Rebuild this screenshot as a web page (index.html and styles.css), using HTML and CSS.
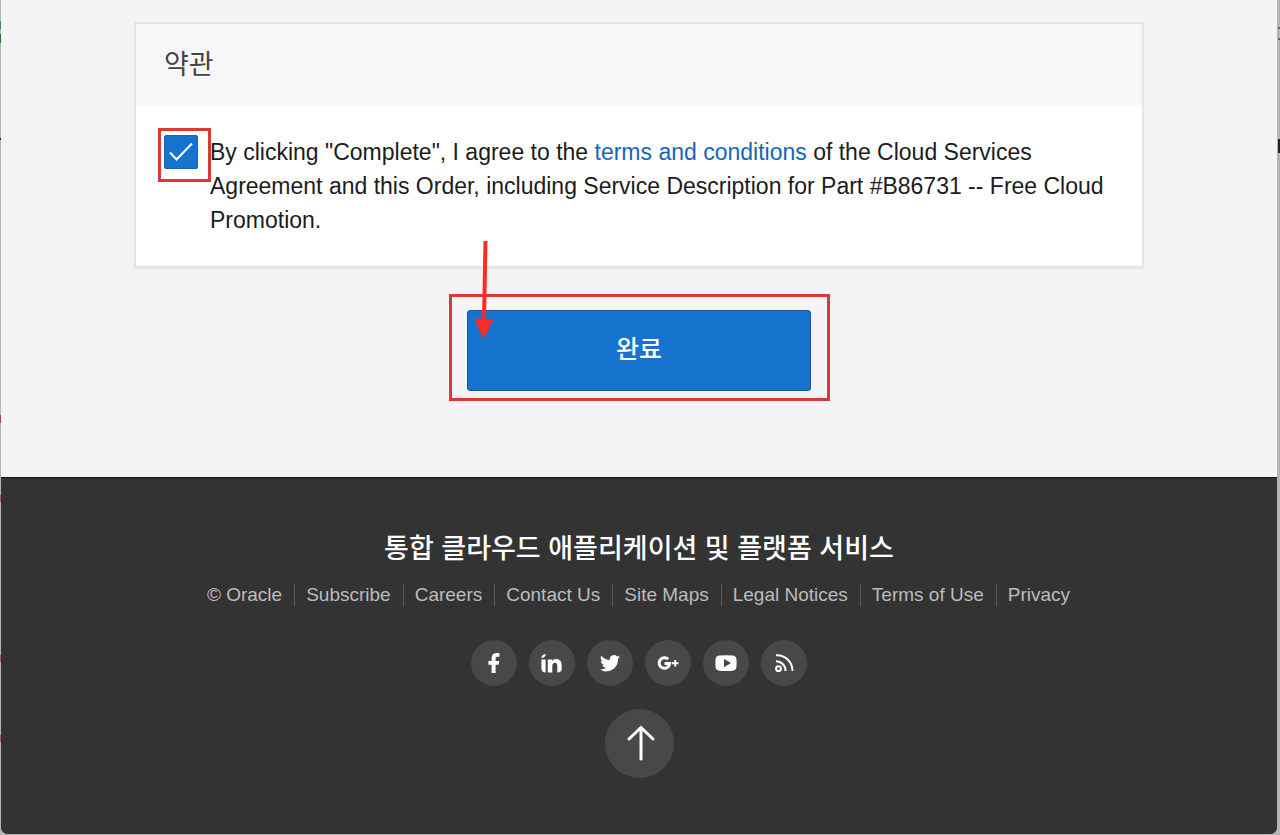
FILE: index.html
```html
<!DOCTYPE html>
<html lang="ko">
<head>
<meta charset="utf-8">
<meta name="viewport" content="width=device-width, initial-scale=1">
<title>약관</title>
<link rel="stylesheet" href="styles.css">
</head>
<body>
<div class="window">
  <main class="content">
    <section class="card">
      <h2 class="card-title">약관</h2>
      <div class="card-body">
        <span class="check">
          <input class="check-input" type="checkbox" id="agree" checked>
          <svg class="check-mark" viewBox="0 0 34 34" aria-hidden="true"><path d="M6 17.500 12.500 24.500 28 8.500"/></svg>
          <span class="highlight highlight-check"></span>
        </span>
        <label class="agree-text" for="agree">By clicking "Complete", I agree to the <a href="#terms">terms and conditions</a> of the Cloud Services Agreement and this Order, including Service Description for Part #B86731 -- Free Cloud Promotion.</label>
      </div>
    </section>
    <div class="action">
      <button class="complete" type="button">완료</button>
      <span class="highlight highlight-action"></span>
      <svg class="pointer" viewBox="0 0 20 100" aria-hidden="true"><path d="M9.500 1h4L12 80H8z"/><path d="M0 78.500 19.500 79.500 9.500 99z"/></svg>
    </div>
  </main>
  <footer class="footer">
    <h3 class="footer-title">통합 클라우드 애플리케이션 및 플랫폼 서비스</h3>
    <nav class="links">
      <a href="#oracle">© Oracle</a>
      <a href="#subscribe">Subscribe</a>
      <a href="#careers">Careers</a>
      <a href="#contact">Contact Us</a>
      <a href="#maps">Site Maps</a>
      <a href="#legal">Legal Notices</a>
      <a href="#use">Terms of Use</a>
      <a href="#privacy">Privacy</a>
    </nav>
    <div class="social">
      <a href="#facebook" aria-label="Facebook"><svg viewBox="0 0 46 46"><path d="M20.600 33V24.800H17.400V21h3.200v-2.700c0-3.500 2-5.300 5.200-5.300 1 0 1.900.1 2.600.2v3.500h-1.900c-1.500 0-1.900.8-1.900 1.900V21h3.600l-.5 3.800h-3.100V33z"/></svg></a>
      <a href="#linkedin" aria-label="LinkedIn"><svg viewBox="0 0 46 46"><path d="M12.400 19.400h4.200v13.200c-2.300-.2-4.200-1.500-4.200-3.800zM12.400 18c0-2.300 1.500-3.800 4.400-4 0 2.300-1.500 3.900-4.400 4zM18.800 19.400h4.300v1.700c.9-1.300 2.200-2 4-2 3.600 0 5.600 2.400 5.600 6.400v3.600c0 2.100-1.500 3.500-4.400 3.500v-7c0-1.900-.8-2.800-2.300-2.800s-2.700 1-2.700 2.900v6.900h-4.500z"/></svg></a>
      <a href="#twitter" aria-label="Twitter"><svg viewBox="0 0 46 46"><path d="M33 17c-.7.300-1.500.5-2.300.6.800-.5 1.500-1.300 1.800-2.200-.8.500-1.700.8-2.600 1a4.100 4.100 0 0 0-7 3.700c-3.400-.2-6.400-1.800-8.500-4.300a4.100 4.100 0 0 0 1.300 5.500c-.7 0-1.300-.2-1.900-.5 0 2 1.400 3.700 3.300 4.100-.6.200-1.200.2-1.800.1.500 1.600 2 2.800 3.800 2.800a8.300 8.300 0 0 1-6.100 1.700 11.700 11.700 0 0 0 18-10.400c.8-.6 1.500-1.300 2-2.100z"/></svg></a>
      <a href="#google" aria-label="Google Plus"><svg viewBox="0 0 46 46"><path class="stroke-bold" d="M23.200 19.200a5.300 5.300 0 1 0 1.500 4.400h-5.200"/><path class="stroke-plus" d="M27 23.200h6.500M30.200 20v6.500"/></svg></a>
      <a href="#youtube" aria-label="YouTube"><svg viewBox="0 0 46 46"><path fill-rule="evenodd" d="M16.500 15.600q6.500-.6 13 0 3.500.2 3.900 3.400.5 4.200 0 8.300-.4 3.100-3.900 3.400-6.500.6-13 0-3.500-.3-3.900-3.400-.5-4.100 0-8.300.4-3.200 3.900-3.400zM21 19v8.200l7-4.100z"/></svg></a>
      <a href="#rss" aria-label="RSS"><svg viewBox="0 0 46 46"><g class="stroke-fine"><circle cx="17.500" cy="28.700" r="2.400"/><path d="M15 21.200a9.500 9.500 0 0 1 9.500 9.700M15 15.200a15.500 15.500 0 0 1 16.500 15.700"/></g></svg></a>
    </div>
    <a class="to-top" href="#top" aria-label="Top"><svg viewBox="0 0 69 69"><path d="M36 50V19M24 30 36 18.500 48 30"/></svg></a>
  </footer>
</div>
</body>
</html>
```
FILE: styles.css
```css
* {
  box-sizing: border-box;
}

body {
  margin: 0;
  padding: 0 3px 1px 1px;
  background-color: #b5b5b5;
  background-image:
    linear-gradient(#3c8a43, #3c8a43),
    linear-gradient(#276f2d, #276f2d),
    linear-gradient(#222, #222),
    linear-gradient(#a04048, #a04048),
    linear-gradient(#a0605c, #a0605c),
    linear-gradient(#a0605c, #a0605c),
    linear-gradient(#a0605c, #a0605c),
    linear-gradient(#666, #666),
    linear-gradient(#666, #666),
    linear-gradient(#222, #222);
  background-position: 0 21px, 0 34px, 0 138px, 0 415px, 0 495px, 0 655px, 0 735px, 100% 27px, 100% 38px, 100% 139px;
  background-repeat: no-repeat;
  background-size: 1px 8px, 1px 9px, 1px 2px, 1px 8px, 1px 7px, 1px 7px, 1px 7px, 2px 2px, 2px 2px, 2px 14px;
  font-family: "Liberation Sans", "Noto Sans CJK KR", sans-serif;
}

.window {
  display: flex;
  flex-direction: column;
  min-height: calc(100vh - 1px);
  overflow: hidden;
  border-radius: 0 0 7px 7px;
  background: #333;
}

.content {
  padding: 22px 133px 86px;
  background: #f4f4f4;
}

.card {
  border: 2px solid #e5e5e5;
  background: #fff;
  box-shadow: 0 1px 1px #e8e8e8;
}

.card-title {
  margin: 0;
  padding: 21px 28px;
  background: #f7f7f7;
  color: #444;
  font-size: 27px;
  font-weight: 400;
  line-height: 40px;
}

.card-body {
  display: flex;
  gap: 12px;
  padding: 29px 28px;
}

.check {
  position: relative;
  flex: none;
  width: 34px;
  height: 34px;
}

.check-input {
  appearance: none;
  display: block;
  width: 34px;
  height: 34px;
  margin: 0;
  border: 1px solid #1c63b0;
  border-radius: 2px;
  background: #1674cf;
}

.check-mark {
  position: absolute;
  inset: 0;
  fill: none;
  stroke: #fff;
  stroke-width: 2;
  pointer-events: none;
}

.agree-text {
  color: #1c1c1c;
  font-size: 23px;
  line-height: 34px;
}

.agree-text a {
  color: #1465bd;
  text-decoration: none;
}

.highlight {
  position: absolute;
  border: 3px solid #d83a34;
  pointer-events: none;
}

.highlight-check {
  inset: -7px -13px -13px -6px;
}

.action {
  position: relative;
  width: 344px;
  margin: 42px auto 0;
}

.complete {
  display: block;
  width: 100%;
  height: 81px;
  padding: 0 0 8px;
  border: 1px solid #1d559c;
  border-radius: 3px;
  background: #1674cf;
  color: #fff;
  font: 500 25px "Noto Sans CJK KR", sans-serif;
}

.highlight-action {
  inset: -16px -19px -10px -18px;
}

.pointer {
  position: absolute;
  top: -70px;
  left: 7px;
  width: 20px;
  height: 100px;
  fill: #fa2d23;
  pointer-events: none;
}

.footer {
  display: flex;
  flex: 1;
  flex-direction: column;
  align-items: center;
  padding: 49px 24px 56px;
  border-top: 1px solid #151515;
  background: #333;
}

.footer-title {
  margin: 0;
  color: #fff;
  font-family: "Noto Sans CJK KR", sans-serif;
  font-size: 27px;
  font-weight: 500;
  line-height: 40px;
}

.links {
  display: flex;
  flex-wrap: wrap;
  justify-content: center;
  margin-top: 17px;
}

.links a {
  padding: 0 12px 0 11px;
  color: #bcbcbc;
  font-size: 19px;
  line-height: 22px;
  text-decoration: none;
}

.links a + a {
  border-left: 1px solid #5c5c5c;
}

.social {
  display: flex;
  gap: 12px;
  margin-top: 34px;
}

.social a {
  width: 46px;
  height: 46px;
  border-radius: 50%;
  background: #484848;
}

.social svg,
.to-top svg {
  display: block;
  fill: #fff;
}

.social .stroke-bold {
  fill: none;
  stroke: #fff;
  stroke-width: 3;
}

.social .stroke-plus,
.social .stroke-fine {
  fill: none;
  stroke: #fff;
  stroke-width: 2;
}

.to-top {
  width: 69px;
  height: 69px;
  margin-top: 23px;
  border-radius: 50%;
  background: #484848;
}

.to-top svg {
  fill: none;
  stroke: #fff;
  stroke-width: 3;
  stroke-linecap: round;
}
```
